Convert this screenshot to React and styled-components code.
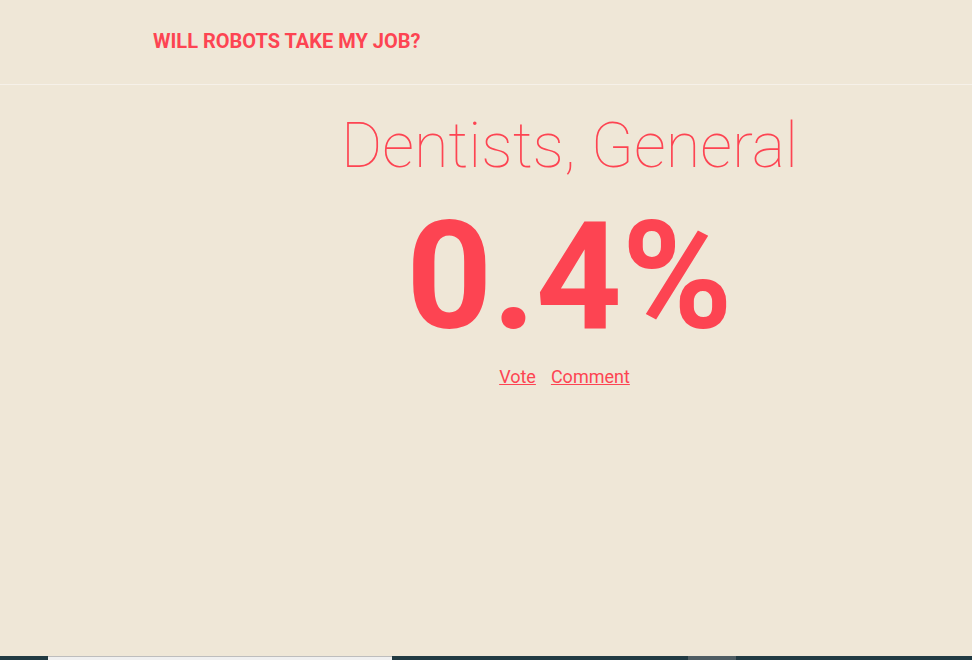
import React from 'react'
import styled, { createGlobalStyle } from 'styled-components'

const GlobalStyle = createGlobalStyle`
  html, body {
    margin: 0;
    padding: 0;
    background: #efe7d7;
    font-family: Roboto, "Liberation Sans", sans-serif;
  }
`

const Page = styled.div`
  height: 660px;
  display: flex;
  flex-direction: column;
  background: #efe7d7;
  overflow: hidden;
`

const Header = styled.header`
  height: 85px;
  flex-shrink: 0;
  display: flex;
  align-items: center;
  padding-left: 153px;
  padding-bottom: 3px;
  box-sizing: border-box;
  border-bottom: 1px solid #f6f1e9;
`

const Brand = styled.a`
  color: #fd4452;
  font-weight: 700;
  font-size: 20px;
  text-transform: uppercase;
  text-decoration: none;
`

const Main = styled.main`
  flex: 1;
  display: flex;
  flex-direction: column;
  align-items: center;
  padding-left: 167px;
`

const JobTitle = styled.h1`
  margin: 24px 0 0;
  color: #fd4452;
  font-weight: 100;
  font-size: 63px;
  line-height: 74px;
`

const Percent = styled.div`
  color: #fd4452;
  font-weight: 700;
  font-size: 150px;
  line-height: 180px;
  margin-top: 4px;
`

const Links = styled.div`
  display: flex;
  gap: 15px;
  margin: -1px 10px 0 0;
  line-height: 21px;
`

const LinkItem = styled.a`
  color: #fd4452;
  font-size: 18px;
  text-decoration: underline;
`

const BottomBar = styled.div`
  height: 4px;
  flex-shrink: 0;
  display: flex;
  background: #213a42;
`

const Segment = styled.div`
  width: ${p => p.w}px;
  margin-left: ${p => p.left}px;
  background: ${p => p.bg};
  box-sizing: border-box;
  border-top: ${p => (p.border ? '1px solid #bdbdbd' : 'none')};
`

export default function App() {
  return (
    <>
      <GlobalStyle />
      <Page>
        <Header>
          <Brand href="#">Will robots take my job?</Brand>
        </Header>
        <Main>
          <JobTitle>Dentists, General</JobTitle>
          <Percent>0.4%</Percent>
          <Links>
            <LinkItem href="#">Vote</LinkItem>
            <LinkItem href="#">Comment</LinkItem>
          </Links>
        </Main>
        <BottomBar>
          <Segment left={48} w={344} bg="#f0f0f0" border />
          <Segment left={296} w={48} bg="#4e5c62" />
        </BottomBar>
      </Page>
    </>
  )
}
